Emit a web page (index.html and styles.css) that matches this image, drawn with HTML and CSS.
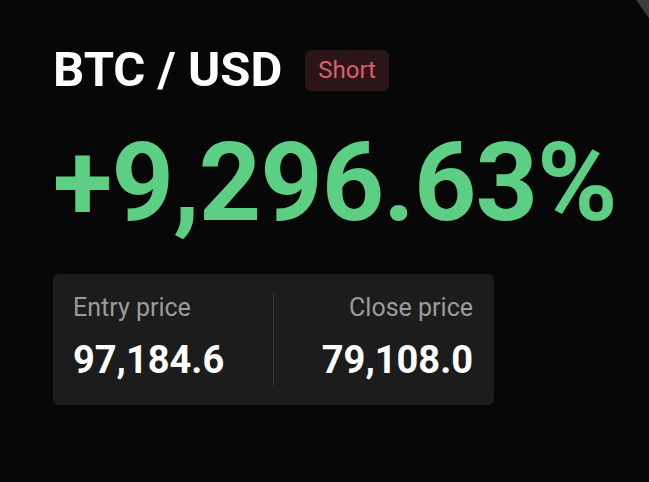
FILE: index.html
```html
<!DOCTYPE html>
<html>
<head>
<meta charset="utf-8">
<link rel="stylesheet" href="styles.css">
</head>
<body>
<div class="corner"></div>
<main class="card-share">
  <div class="pair-row">
    <h1 class="pair">BTC / USD</h1>
    <span class="side">Short</span>
  </div>
  <div class="pnl">+9,296.63%</div>
  <div class="prices">
    <div class="price-col">
      <div class="price-label">Entry price</div>
      <div class="price-value">97,184.6</div>
    </div>
    <div class="divider"></div>
    <div class="price-col right">
      <div class="price-label">Close price</div>
      <div class="price-value">79,108.0</div>
    </div>
  </div>
</main>
</body>
</html>
```
FILE: styles.css
```css
html, body {
  margin: 0;
  padding: 0;
  background: #070707;
  width: 649px;
  height: 482px;
  overflow: hidden;
  font-family: Roboto, "Liberation Sans", sans-serif;
}
.corner {
  position: absolute;
  top: 0;
  right: 0;
  width: 13px;
  height: 18px;
  background: #3c3c3c;
  clip-path: polygon(0 0, 100% 0, 100% 100%);
}
.card-share {
  padding: 41px 0 0 53px;
}
.pair-row {
  display: flex;
  align-items: center;
  gap: 23px;
}
.pair {
  margin: 0;
  font-size: 49px;
  font-weight: 700;
  color: #ffffff;
  line-height: 58px;
}
.side {
  display: inline-block;
  background: #2b1517;
  color: #dc5f69;
  font-size: 24px;
  line-height: 41px;
  padding: 0 13px;
  border-radius: 6px;
}
.pnl {
  margin-top: 29px;
  font-size: 109px;
  font-weight: 700;
  color: #5ccf85;
  line-height: 110px;
  letter-spacing: -1px;
}
.prices {
  margin-top: 36px;
  width: 441px;
  height: 131px;
  background: #1c1c1c;
  border-radius: 6px;
  display: flex;
  align-items: center;
  box-sizing: border-box;
  padding: 0 21px 0 20px;
}
.price-col {
  flex: 1;
  display: flex;
  flex-direction: column;
  gap: 16px;
  margin-top: -4px;
}
.price-col.right {
  align-items: flex-end;
}
.divider {
  width: 1px;
  height: 93px;
  background: #323232;
}
.price-label {
  font-size: 25px;
  color: #9b9b9b;
  line-height: 28px;
}
.price-value {
  font-size: 38px;
  font-weight: 700;
  color: #ffffff;
  line-height: 44px;
}
```
